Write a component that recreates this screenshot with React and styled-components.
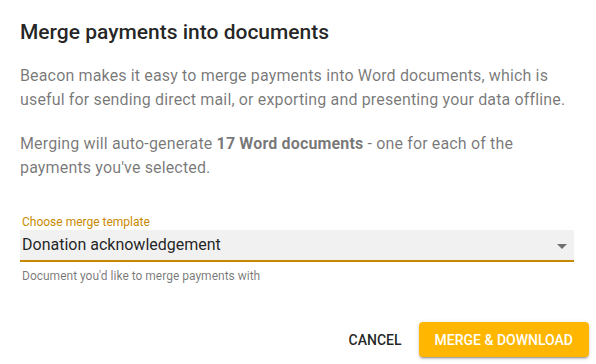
import React from "react";
import styled, { createGlobalStyle } from "styled-components";

const Global = createGlobalStyle`
  html, body { margin: 0; padding: 0; background: #fff; }
  body { font-family: Roboto, "Noto Sans", sans-serif; -webkit-font-smoothing: antialiased; }
  * { box-sizing: border-box; }
`;

const Dialog = styled.div`
  width: 596px;
  height: 364px;
  display: flex;
  flex-direction: column;
  background: #fff;
  overflow: hidden;
`;

const Title = styled.h2`
  margin: 16px 0 0;
  padding: 0 20px;
  font-size: 21px;
  line-height: 32px;
  font-weight: 500;
  color: rgba(0, 0, 0, 0.87);
  letter-spacing: 0;
`;

const Content = styled.div`
  padding: 0 22px 0 20px;
  display: flex;
  flex-direction: column;
`;

const Para = styled.p`
  margin: ${(p) => p.$top}px 0 0;
  font-size: 16px;
  line-height: 24px;
  color: rgba(0, 0, 0, 0.54);
  letter-spacing: 0.00938em;
  strong { font-weight: 700; }
`;

const Field = styled.div`
  margin-top: 34px;
  display: flex;
  flex-direction: column;
`;

const Label = styled.label`
  font-size: 12px;
  line-height: 16px;
  color: #c98a00;
  padding-left: 2px;
`;

const SelectBox = styled.div`
  height: 32px;
  background: #f1f1f1;
  border-bottom: 2px solid #c88700;
  display: flex;
  align-items: flex-start;
  justify-content: space-between;
  padding: 3px 7px 0 2px;
`;

const SelectValue = styled.span`
  font-size: 16px;
  line-height: 24px;
  color: rgba(0, 0, 0, 0.87);
`;

const Arrow = styled.svg`
  margin-top: 11px;
  flex: none;
`;

const Helper = styled.span`
  margin-top: 6px;
  padding-left: 2px;
  font-size: 12px;
  line-height: 16px;
  color: rgba(0, 0, 0, 0.54);
`;

const Actions = styled.div`
  margin-top: 38px;
  padding-right: 7px;
  display: flex;
  justify-content: flex-end;
  align-items: center;
  gap: 9px;
`;

const Button = styled.button`
  height: 35px;
  padding: 0 ${(p) => (p.$primary ? 16 : 8)}px;
  border: none;
  border-radius: 4px;
  font-family: Roboto, "Noto Sans", sans-serif;
  font-size: 14px;
  font-weight: 500;
  letter-spacing: 0;
  text-transform: uppercase;
  cursor: pointer;
  color: ${(p) => (p.$primary ? "#fff" : "rgba(0,0,0,0.87)")};
  background: ${(p) => (p.$primary ? "#ffb600" : "transparent")};
  box-shadow: ${(p) =>
    p.$primary
      ? "0px 3px 1px -2px rgba(0,0,0,0.2), 0px 2px 2px 0px rgba(0,0,0,0.14), 0px 1px 5px 0px rgba(0,0,0,0.12)"
      : "none"};
`;

export default function App() {
  return (
    <>
      <Global />
      <Dialog>
        <Title>Merge payments into documents</Title>
        <Content>
          <Para $top={16}>
            Beacon makes it easy to merge payments into Word documents, which is
            useful for sending direct mail, or exporting and presenting your data offline.
          </Para>
          <Para $top={20}>
            Merging will auto-generate <strong>17 Word documents</strong> - one for each of the
            payments you've selected.
          </Para>
          <Field>
            <Label>Choose merge template</Label>
            <SelectBox>
              <SelectValue>Donation acknowledgement</SelectValue>
              <Arrow width="10" height="5" viewBox="0 0 10 5">
                <path d="M0 0h10L5 5z" fill="rgba(0,0,0,0.54)" />
              </Arrow>
            </SelectBox>
            <Helper>Document you'd like to merge payments with</Helper>
          </Field>
        </Content>
        <Actions>
          <Button>Cancel</Button>
          <Button $primary>Merge &amp; Download</Button>
        </Actions>
      </Dialog>
    </>
  );
}
